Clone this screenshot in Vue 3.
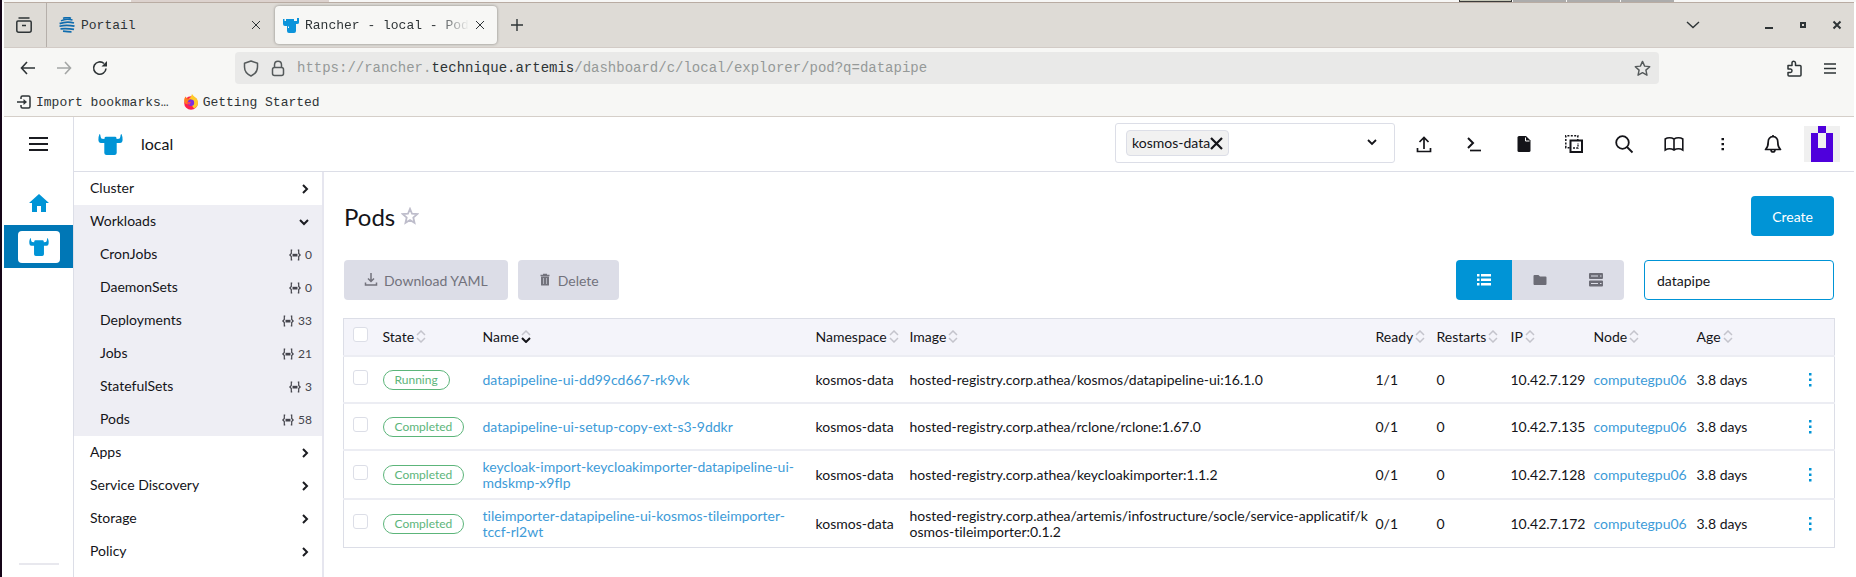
<script setup>
import { ref } from 'vue'

const query = ref('datapipe')

const workloads = [
  { name: 'CronJobs', count: 0 },
  { name: 'DaemonSets', count: 0 },
  { name: 'Deployments', count: 33 },
  { name: 'Jobs', count: 21 },
  { name: 'StatefulSets', count: 3 },
  { name: 'Pods', count: 58 }
]
const closedGroups = ['Apps', 'Service Discovery', 'Storage', 'Policy']

const columns = [
  { key: 'state', label: 'State' },
  { key: 'name', label: 'Name', sorted: true },
  { key: 'namespace', label: 'Namespace' },
  { key: 'image', label: 'Image' },
  { key: 'ready', label: 'Ready' },
  { key: 'restarts', label: 'Restarts' },
  { key: 'ip', label: 'IP' },
  { key: 'node', label: 'Node' },
  { key: 'age', label: 'Age' }
]

const pods = [
  { state: 'Running', name: 'datapipeline-ui-dd99cd667-rk9vk', image: 'hosted-registry.corp.athea/kosmos/datapipeline-ui:16.1.0', ready: '1/1', ip: '10.42.7.129' },
  { state: 'Completed', name: 'datapipeline-ui-setup-copy-ext-s3-9ddkr', image: 'hosted-registry.corp.athea/rclone/rclone:1.67.0', ready: '0/1', ip: '10.42.7.135' },
  { state: 'Completed', name: 'keycloak-import-keycloakimporter-datapipeline-ui-mdskmp-x9flp', image: 'hosted-registry.corp.athea/keycloakimporter:1.1.2', ready: '0/1', ip: '10.42.7.128' },
  { state: 'Completed', name: 'tileimporter-datapipeline-ui-kosmos-tileimporter-tccf-rl2wt', image: 'hosted-registry.corp.athea/artemis/infostructure/socle/service-applicatif/kosmos-tileimporter:0.1.2', ready: '0/1', ip: '10.42.7.172' }
]

const steer = 'M1.5 0C2.3 0 2.4 1 2.7 3Q3 4.5 4 4.7L6.5 5V4Q6.8 2.7 8 2.7H17Q18.3 2.7 18.5 4V5L21 4.7Q22 4.5 22.3 3C22.6 1 22.7 0 23.5 0Q24.8 3 24.6 6Q24.4 9 22 9H18.7V19Q18.5 21 16.5 21H8.5Q6.4 21 6.3 19V9H3Q.6 9 .4 6Q.2 3 1.5 0Z'
</script>

<template>
  <div class="desktop">
    <div class="behind">
      <span class="behind-tab"></span>
      <span class="behind-boxes"><i class="current"></i><i></i><i></i><i></i></span>
    </div>

    <div class="window">
      <header class="browser">
        <div class="tabs">
          <button class="view" aria-label="Firefox View">
            <svg width="16" height="16" viewBox="0 0 16 16" fill="none" stroke="currentColor" stroke-width="1.5"><path d="M2.5 1h11M2 4h12q1.2 0 1.2 1.2v8q0 2-2 2H2.8q-2 0-2-2v-8Q.8 4 2 4ZM6 8.500h4" /></svg>
          </button>
          <div class="tab">
            <svg width="16" height="16" viewBox="0 0 16 16"><g fill="none" stroke="#0f6cae" stroke-width="1.5"><path d="M4 1.200Q9-.3 12 1.300M2 3.800q5-2.800 11.500-.8" /><path d="M.6 6.600Q8 3.800 15 6M.5 9.200q7-1.800 15 0M1.500 11.800q7-.6 13.500.6M4 14.200q5 .6 8.500.6" stroke-width="1.700" /></g></svg>
            <span class="tab-title">Portail</span>
            <button class="plain" aria-label="Close tab"><svg width="10" height="10" viewBox="0 0 10 10" stroke="currentColor"><path d="m1 1 8 8M9 1 1 9" /></svg></button>
          </div>
          <div class="tab active">
            <svg width="16" height="15" viewBox="0 0 16 15" fill="#0c94db"><path d="M0 1h1.500v2H3V1h8v2h3V0h2v4.500q0 1.500-2 1.500h-1v7q0 2-2 2H6q-2 0-2-2V8H2Q0 8 0 6Z" /><path d="M5 8.500h1v1.500H5z" fill="#fff" /></svg>
            <span class="tab-title fade">Rancher - local - Pod</span>
            <button class="plain" aria-label="Close tab"><svg width="10" height="10" viewBox="0 0 10 10" stroke="currentColor"><path d="m1 1 8 8M9 1 1 9" /></svg></button>
          </div>
          <button class="plain new-tab" aria-label="New tab"><svg width="14" height="14" viewBox="0 0 14 14" stroke="currentColor" stroke-width="1.4"><path d="M7 1v12M1 7h12" /></svg></button>
          <div class="wincontrols">
            <button class="plain tab-list" aria-label="List all tabs"><svg width="14" height="8" viewBox="0 0 14 8" fill="none" stroke="currentColor" stroke-width="1.4"><path d="m1 1 6 5.500L13 1" /></svg></button>
            <button class="plain" aria-label="Minimize"><svg width="10" height="10" viewBox="0 0 10 10"><path d="M1 7h8v2H1z" fill="currentColor" /></svg></button>
            <button class="plain" aria-label="Maximize"><svg width="10" height="10" viewBox="0 0 10 10"><path d="M3 3h4v4H3z" fill="none" stroke="currentColor" stroke-width="2" /></svg></button>
            <button class="plain" aria-label="Close"><svg width="10" height="10" viewBox="0 0 10 10" stroke="currentColor" stroke-width="2"><path d="m1.500 1.500 7 7M8.500 1.500l-7 7" /></svg></button>
          </div>
        </div>

        <div class="toolbar">
          <div class="history">
            <button class="plain" aria-label="Back"><svg width="16" height="14" viewBox="0 0 16 14" fill="none" stroke="currentColor" stroke-width="1.600"><path d="M7 1 1.500 7 7 13M1.500 7H15" /></svg></button>
            <button class="plain off" disabled aria-label="Forward"><svg width="16" height="14" viewBox="0 0 16 14" fill="none" stroke="currentColor" stroke-width="1.600"><path d="m9 1 5.500 6L9 13M14.500 7H1" /></svg></button>
            <button class="plain" aria-label="Reload"><svg width="16" height="16" viewBox="0 0 16 16"><path d="M14 8.500A6.200 6.200 0 1 1 12 3.500" fill="none" stroke="currentColor" stroke-width="1.600" /><path d="M15 1v5.500H9.500z" fill="currentColor" /></svg></button>
          </div>
          <div class="urlbar">
            <svg width="16" height="17" viewBox="0 0 16 17" fill="none" stroke="currentColor" stroke-width="1.500"><path d="M8 1 14.500 3.300V7q0 6-6.500 9Q1.500 13 1.500 7V3.300Z" stroke-linejoin="round" /></svg>
            <svg width="14" height="17" viewBox="0 0 14 17" fill="none" stroke="currentColor" stroke-width="1.500"><rect x="1.500" y="7.500" width="11" height="8" rx="2" /><path d="M3.500 7.500V5Q3.500 1.300 7 1.300T10.500 5v2.500" /></svg>
            <span class="url">https://rancher.<b>technique.artemis</b>/dashboard/c/local/explorer/pod?q=datapipe</span>
            <button class="plain" aria-label="Bookmark this page"><svg width="17" height="17" viewBox="0 0 24 24" fill="none" stroke="currentColor" stroke-width="2" stroke-linejoin="round"><path d="m12 2 3 6.600 7.200.8-5.400 4.900L18.300 21.500 12 17.900 5.700 21.500l1.500-7.200L1.800 9.400 9 8.600Z" /></svg></button>
          </div>
          <div class="toolbar-end">
            <button class="plain" aria-label="Extensions"><svg width="15" height="17" viewBox="0 0 15 17" fill="none" stroke="currentColor" stroke-width="1.500" stroke-linejoin="round"><path d="M1 5.500h4V3q0-1.800 1.700-1.800T8.500 3v2.500H13q1 0 1 1V15q0 1-1 1H2q-1 0-1-1v-2.500h2.500q1.500 0 1.500-1.700T3.500 9H1Z" /></svg></button>
            <button class="plain" aria-label="Application menu"><svg width="12" height="11" viewBox="0 0 12 11" stroke="currentColor" stroke-width="1.300"><path d="M0 1h12M0 5.500h12M0 10h12" /></svg></button>
          </div>
        </div>

        <div class="bookmarks">
          <a href="#"><svg width="16" height="14" viewBox="0 0 16 14" fill="none" stroke="currentColor" stroke-width="1.500"><path d="M5 4V2.500Q5 1 6.500 1h6Q14 1 14 2.500v9q0 1.500-1.500 1.500h-6Q5 13 5 11.500V10M1 7h7" /><path d="M7.500 4 11 7l-3.500 3z" fill="currentColor" stroke="none" /></svg><span>Import bookmarks…</span></a>
          <a href="#"><svg width="16" height="16" viewBox="0 0 16 16"><circle cx="8" cy="9" r="6.800" fill="#ff1f4d" /><path d="M9 0q1 1.500 2.500 2.800 3.500 2.200 3.500 6Q15 13 11 14.500L7 9 6 4.500Q8.500 3 9 0Z" fill="#ffca28" /><path d="M2.500 2.500 4 4.500 8 5q2 4-1 6L2 9.500Q0 6 2.500 2.500Z" fill="#ff7a1f" /><circle cx="8" cy="8.800" r="3.200" fill="#7b2fe0" /><path d="M4 8q2 .2 4-.2L6.500 11Q4.500 10 4 8Z" fill="#ff3d5a" /></svg><span>Getting Started</span></a>
        </div>
      </header>

      <div class="app">
        <nav class="rail" aria-label="Clusters">
          <button class="plain burger" aria-label="Menu"><svg width="19" height="14" viewBox="0 0 19 14" stroke="#1b1c21" stroke-width="2"><path d="M0 1h19M0 7h19M0 13h19" /></svg></button>
          <a class="home" href="#" aria-label="Home"><svg width="20" height="18" viewBox="0 0 20 18" fill="#0094d6"><path d="M10 0 20 9H17V18H12V12H8V18H3V9H0Z" /></svg></a>
          <a class="cluster" href="#" aria-label="local"><span><svg width="20" height="18" viewBox="0 0 25 21" preserveAspectRatio="none" fill="#0094d6"><path :d="steer" /></svg></span></a>
          <hr />
        </nav>

        <div class="main">
          <div class="topbar">
            <svg width="25" height="21" viewBox="0 0 25 21" fill="#0094d6"><path :d="steer" /></svg>
            <span class="cluster-name label">local</span>
            <div class="ns-filter">
              <span class="chip"><span class="label">kosmos-data</span><button class="plain" aria-label="Remove kosmos-data"><svg width="13" height="13" viewBox="0 0 13 13" stroke="currentColor" stroke-width="2.200"><path d="m1 1 11 11M12 1 1 12" /></svg></button></span>
              <button class="plain" aria-label="Open namespace list"><svg width="10" height="8" viewBox="0 0 10 8" fill="none" stroke="currentColor" stroke-width="1.800"><path d="m1 1 4 4 4-4" /></svg></button>
            </div>
            <div class="actions">
              <button class="plain" aria-label="Import YAML"><svg width="20" height="20" viewBox="0 0 20 20" fill="none" stroke="currentColor" stroke-width="1.700"><path d="M10 15V4M5.500 8 10 3.500 14.500 8M3.500 14v3.500h13V14" /></svg></button>
              <button class="plain" aria-label="Kubectl shell"><svg width="20" height="20" viewBox="0 0 20 20" fill="none" stroke="currentColor" stroke-width="2"><path d="m4 4 5 5-5 5" /><path d="M6 16.500h11" stroke-width="1.700" /></svg></button>
              <button class="plain" aria-label="Download KubeConfig"><svg width="20" height="20" viewBox="0 0 20 20"><path d="M5 2h7l4.500 4.500V16.500q0 1.500-1.500 1.500H5q-1.500 0-1.500-1.500v-13Q3.500 2 5 2Z" fill="currentColor" /><path d="M11.500 3.500V7H15.500" fill="none" stroke="#fff" /></svg></button>
              <button class="plain" aria-label="Copy KubeConfig"><svg width="20" height="20" viewBox="0 0 20 20" fill="none" stroke="currentColor" stroke-width="1.500"><path d="M1.800 13.800v-12h12v12z" stroke-dasharray="2 1.400" /><rect x="6.500" y="6.500" width="11.500" height="11.500" fill="#fff" stroke-width="2" /><path d="M9 14h5V9" stroke-dasharray="2 1.200" stroke-width="1.300" /></svg></button>
              <button class="plain" aria-label="Search"><svg width="20" height="20" viewBox="0 0 20 20" fill="none" stroke="currentColor" stroke-width="1.800"><circle cx="8.500" cy="8.500" r="6.300" /><path d="m13 13 5.500 5.500" /></svg></button>
              <button class="plain" aria-label="Documentation"><svg width="20" height="20" viewBox="0 0 20 20" fill="none" stroke="currentColor" stroke-width="1.600"><path d="M10 5Q8 3.800 5.500 3.800T1.200 5v11q2-1.200 4.300-1.200T10 16q2-1.200 4.500-1.200t4.300 1.200V5q-1.800-1.200-4.300-1.200T10 5Zm0 0v11" /></svg></button>
              <button class="plain" aria-label="More"><svg width="20" height="20" viewBox="0 0 20 20" fill="currentColor"><path d="M7.500 4H10v2.300H7.500zM7.500 9H10v2.300H7.500zM7.500 14H10v2.300H7.500z" /></svg></button>
              <button class="plain" aria-label="Notifications"><svg width="20" height="20" viewBox="0 0 20 20" fill="none" stroke="currentColor" stroke-width="1.700" stroke-linejoin="round"><path d="M9 2.500q4.800.5 4.800 5.500 0 5 2.700 7.500H1.500Q4.200 13 4.200 8q0-5 4.800-5.500ZM9 2.500V1M7 15.500Q7 18 9 18t2-2.500" /></svg></button>
            </div>
            <svg class="avatar" width="36" height="36" viewBox="0 0 5 5" shape-rendering="crispEdges" role="img" aria-label="User"><path d="M0 0h5v5H0z" fill="#f0f0f0" /><path d="M2 0h1v1h1v4H1V1h1v2h1V1H2Z" fill="#4f00dc" fill-rule="evenodd" /></svg>
          </div>

          <div class="body">
            <nav class="sidebar" aria-label="Resources">
              <a class="group" href="#"><span class="label">Cluster</span><svg width="8" height="10" viewBox="0 0 8 10"><path d="m2 1 4 4-4 4" /></svg></a>
              <div class="open">
                <a class="group" href="#"><span class="label">Workloads</span><svg width="10" height="8" viewBox="0 0 10 8"><path d="m1 2 4 4 4-4" /></svg></a>
                <a v-for="w in workloads" :key="w.name" class="child" href="#">
                  <span class="label">{{ w.name }}</span>
                  <span class="count"><svg width="12" height="12" viewBox="0 0 12 12"><path d="M3.200 1.200H2.300v3.300L.8 6l1.500 1.500v3.300h.9M8.800 1.200h.9v3.300L11.200 6 9.700 7.500v3.300h-.9" fill="none" stroke="currentColor" stroke-width="1.200" /><path d="M3.500 4.800h5v2.700h-5z" fill="currentColor" /></svg>{{ w.count }}</span>
                </a>
              </div>
              <a v-for="g in closedGroups" :key="g" class="group" href="#"><span class="label">{{ g }}</span><svg width="8" height="10" viewBox="0 0 8 10"><path d="m2 1 4 4-4 4" /></svg></a>
            </nav>

            <main class="content">
              <div class="title-row">
                <h1>Pods</h1>
                <button class="plain fav" aria-label="Favorite"><svg width="18" height="18" viewBox="0 0 24 24" fill="none" stroke="#bebdcb" stroke-width="2.400"><path d="m12 2.500 2.700 6.500 7 .5-5.300 4.600 1.600 6.900-6-3.700-6 3.700 1.600-6.900L2.300 9.500l7-.5Z" /></svg></button>
                <button class="btn primary">Create</button>
              </div>

              <div class="tools">
                <button class="btn muted" disabled><svg width="14" height="14" viewBox="0 0 14 14" fill="none" stroke="currentColor" stroke-width="1.500"><path d="M7 0v8.500M4 5.500l3 3 3-3M1.500 9.500V12h11V9.500" /></svg>Download YAML</button>
                <button class="btn muted" disabled><svg width="14" height="14" viewBox="0 0 14 14"><path d="M3 3.500h8V12q0 .5-.5.5h-7q-.5 0-.5-.5Z" fill="currentColor" /><path d="M2.500 2.500h9M5 1.500h4" stroke="currentColor" stroke-width="1.300" /><path d="M5.500 5v6M8.500 5v6" stroke="#dcdde7" stroke-width=".6" /></svg>Delete</button>
                <div class="views" role="group" aria-label="Grouping">
                  <button class="on" aria-label="Flat list"><svg width="14" height="12" viewBox="0 0 14 12" fill="currentColor"><path d="M0 0h2.500v2.500H0zM4 0h10v2.500H4zM0 4.500h2.500V7H0zM4 4.500h10V7H4zM0 9h2.500v2.500H0zM4 9h10v2.500H4z" /></svg></button>
                  <button aria-label="Group by namespace"><svg width="14" height="12" viewBox="0 0 14 12" fill="currentColor"><path d="M1.500 1h4L7 2.500h5.500Q13.500 2.500 13.500 3.500v6.500q0 1-1 1h-11q-1 0-1-1V2q0-1 1-1Z" /></svg></button>
                  <button aria-label="Group by node"><svg width="14" height="14" viewBox="0 0 14 14" fill="currentColor"><path d="M1 0h12q1 0 1 1v4q0 1-1 1H1Q0 6 0 5V1q0-1 1-1ZM1 7.500h12q1 0 1 1v4q0 1-1 1H1q-1 0-1-1v-4q0-1 1-1Z" /><path d="M2 3h7M11 3h1.500M2 10.500h7M11 10.500h1.500" stroke="#dcdde7" stroke-width="1.200" /></svg></button>
                </div>
                <input v-model="query" class="search" type="text" aria-label="Filter" />
              </div>

              <table>
                <colgroup>
                  <col class="c-check" /><col v-for="c in columns" :key="c.key" :class="'c-' + c.key" /><col class="c-menu" />
                </colgroup>
                <thead>
                  <tr>
                    <th class="check"><input type="checkbox" aria-label="Select all" /></th>
                    <th v-for="c in columns" :key="c.key"><span class="th">{{ c.label }}<svg width="10" height="13" viewBox="0 0 10 13" fill="none" stroke-width="1.500"><path d="m1 5 4-4 4 4" stroke="#c4c4cc" /><path d="m1 8 4 4 4-4" :stroke="c.sorted ? '#141419' : '#c4c4cc'" :stroke-width="c.sorted ? 2 : 1.5" /></svg></span></th>
                    <th></th>
                  </tr>
                </thead>
                <tbody>
                  <tr v-for="p in pods" :key="p.name">
                    <td class="check"><input type="checkbox" :aria-label="'Select ' + p.name" /></td>
                    <td><span class="badge">{{ p.state }}</span></td>
                    <td><a href="#">{{ p.name }}</a></td>
                    <td>kosmos-data</td>
                    <td class="image">{{ p.image }}</td>
                    <td>{{ p.ready }}</td>
                    <td>0</td>
                    <td>{{ p.ip }}</td>
                    <td><a href="#">computegpu06</a></td>
                    <td>3.8 days</td>
                    <td class="menu"><button class="plain" aria-label="Row actions"><svg width="4" height="14" viewBox="0 0 4 14" fill="#0094d6"><path d="M1 0h2.500v2.500H1zM1 5.500h2.500V8H1zM1 11h2.500v2.500H1z" /></svg></button></td>
                  </tr>
                </tbody>
              </table>
            </main>
          </div>
        </div>
      </div>
    </div>
  </div>
</template>

<style>
body {
  margin: 0;
  background: #fff;
}
</style>

<style scoped>
* {
  box-sizing: border-box;
}
svg {
  display: block;
  flex: none;
}
a {
  text-decoration: none;
  color: inherit;
}
button {
  font: inherit;
}
.plain {
  display: flex;
  padding: 0;
  border: 0;
  background: none;
  color: inherit;
}
.desktop {
  min-height: 100vh;
  display: flex;
  flex-direction: column;
  border-left: 2px solid #150518;
}
.behind {
  display: flex;
  justify-content: space-between;
  height: 2px;
  padding: 0 182px 0 129px;
  background: #f7f7f6;
}
.behind-tab {
  width: 198px;
  background: #dcd2ce;
}
.behind-boxes {
  display: flex;
  gap: 1px;
}
.behind-boxes i {
  width: 53px;
  background: #acacac;
}
.behind-boxes .current {
  background: #c6c8b8;
  border: solid #3c3c3c;
  border-width: 0 1px 1px;
}
.window {
  flex: 1;
  display: flex;
  flex-direction: column;
  margin: 0 2px;
}

/* browser chrome */
.browser {
  font-family: "Liberation Mono", monospace;
  font-size: 13px;
  color: #2e3436;
  background: #f7f7f5;
  border-bottom: 1px solid #d5cfc9;
}
.tabs {
  display: flex;
  align-items: center;
  height: 46px;
  background: #dedbd6;
  border-top: 1px solid #b9aca3;
  border-bottom: 1px solid #d2cbc6;
}
.view {
  display: flex;
  align-items: center;
  align-self: stretch;
  width: 43px;
  padding: 0 0 0 12px;
  border: 0;
  border-right: 1px solid #b5afaa;
  background: none;
  color: inherit;
}
.tab {
  display: flex;
  align-items: center;
  gap: 6px;
  width: 222px;
  height: 38px;
  padding: 0 8px 0 12px;
  border-radius: 4px;
}
.tab.active {
  margin-left: 6px;
  padding: 0 12px 0 8px;
  background: #f7f7f5;
  box-shadow: 0 0 3px #0006;
}
.tab-title {
  flex: 1;
  min-width: 0;
  white-space: nowrap;
}
.fade {
  -webkit-mask-image: linear-gradient(to left, transparent, #000 32px);
  mask-image: linear-gradient(to left, transparent, #000 32px);
}
.new-tab {
  margin-left: 13px;
}
.wincontrols {
  display: flex;
  align-items: center;
  gap: 24px;
  margin-left: auto;
  padding-right: 12px;
}
.tab-list {
  margin-right: 40px;
}
.toolbar {
  display: flex;
  align-items: center;
  padding: 4px 18px 4px 16px;
}
.history {
  display: flex;
  align-items: center;
  gap: 20px;
  width: 215px;
}
.off {
  color: #a4a6a5;
}
.urlbar {
  flex: 1;
  display: flex;
  align-items: center;
  gap: 12px;
  height: 32px;
  padding: 0 8px;
  margin-right: 128px;
  border-radius: 4px;
  background: #e9e9e8;
  color: #555a5b;
}
.url {
  flex: 1;
  font-size: 14px;
  color: #959998;
}
.url b {
  font-weight: 400;
  color: #2e3436;
}
.toolbar-end {
  display: flex;
  align-items: center;
  gap: 22px;
}
.bookmarks {
  display: flex;
  align-items: center;
  gap: 14px;
  height: 28px;
  padding: 0 12px;
}
.bookmarks a {
  display: flex;
  align-items: center;
  gap: 4px;
}

/* dashboard */
.app {
  flex: 1;
  display: flex;
  font-family: Lato, "Liberation Sans", sans-serif;
  font-size: 14px;
  font-variant-ligatures: no-common-ligatures;
  color: #141419;
}
.label {
  padding-bottom: 2px;
}
.rail {
  display: flex;
  flex-direction: column;
  width: 70px;
  border-right: 1px solid #dcdee7;
}
.burger {
  justify-content: center;
  align-items: center;
  height: 54px;
}
.home {
  display: flex;
  justify-content: center;
  align-items: center;
  height: 54px;
  padding-top: 10px;
}
.cluster {
  display: flex;
  justify-content: center;
  align-items: center;
  height: 43px;
  background: #0077b6;
}
.cluster span {
  display: flex;
  justify-content: center;
  align-items: center;
  width: 42px;
  height: 32px;
  border-radius: 4px;
  background: #fff;
}
.rail hr {
  width: 40px;
  height: 2px;
  margin: auto auto 12px;
  border: 0;
  background: #e8e8ee;
}
.main {
  flex: 1;
  min-width: 0;
  display: flex;
  flex-direction: column;
}
.topbar {
  display: flex;
  align-items: center;
  height: 55px;
  padding: 0 14px 0 24px;
  border-bottom: 1px solid #dcdee7;
}
.cluster-name {
  flex: 1;
  margin-left: 18px;
  font-size: 16px;
}
.ns-filter {
  display: flex;
  align-items: center;
  justify-content: space-between;
  width: 280px;
  height: 40px;
  padding: 0 17px 0 10px;
  margin-bottom: 2px;
  border: 1px solid #dcdee7;
  border-radius: 3px;
}
.chip {
  display: flex;
  align-items: center;
  height: 26px;
  padding: 0 5px;
  border: 1px solid #dcdee7;
  border-radius: 4px;
  background: #f1f1f1;
}
.actions {
  display: flex;
  gap: 30px;
  margin: 0 20px 0 19px;
}
.body {
  flex: 1;
  display: flex;
}
.sidebar {
  width: 250px;
  border-right: 2px solid #e6e6ef;
}
.group,
.child {
  display: flex;
  align-items: center;
  justify-content: space-between;
  height: 33px;
  padding: 0 13px 0 16px;
}
.group svg {
  fill: none;
  stroke: #1b1c21;
  stroke-width: 2;
}
.open {
  background: #eeeef4;
}
.child {
  padding: 0 10px 0 26px;
}
.count {
  display: flex;
  align-items: center;
  gap: 4px;
  font-size: 12px;
  color: #44444c;
}
.content {
  flex: 1;
  min-width: 0;
  padding: 24px 19px 20px;
}
.title-row {
  display: flex;
  align-items: center;
  padding: 0 1px;
}
h1 {
  margin: 0;
  font-size: 24px;
  font-weight: 400;
}
.fav {
  margin: 0 auto 0 6px;
}
.btn {
  display: flex;
  align-items: center;
  gap: 6px;
  height: 40px;
  padding: 0 21px;
  border: 0;
  border-radius: 4px;
}
.primary {
  background: #0094d6;
  color: #fff;
}
.muted {
  padding: 0 20px;
  background: #dcdde7;
  color: #72727c;
}
.tools {
  display: flex;
  gap: 10px;
  margin-top: 24px;
  padding: 0 1px;
}
.views {
  display: flex;
  margin: 0 10px 0 auto;
  border-radius: 4px;
  overflow: hidden;
}
.views button {
  display: flex;
  align-items: center;
  justify-content: center;
  width: 56px;
  padding: 0;
  border: 0;
  background: #dcdde7;
  color: #6c6c76;
}
.views .on {
  background: #0094d6;
  color: #fff;
}
.search {
  width: 190px;
  height: 40px;
  padding: 0 12px;
  border: 1px solid #0094d6;
  border-radius: 4px;
  font: inherit;
  color: inherit;
}
table {
  width: 100%;
  margin-top: 18px;
  table-layout: fixed;
  border-collapse: collapse;
  border: 1px solid #dcdee7;
  line-height: 16px;
}
.c-check { width: 34px; }
.c-state { width: 100px; }
.c-name { width: 333px; }
.c-namespace { width: 94px; }
.c-ready { width: 61px; }
.c-restarts { width: 74px; }
.c-ip { width: 83px; }
.c-node { width: 103px; }
.c-age { width: 94px; }
.c-menu { width: 49px; }
th,
td {
  padding: 0 5px;
  text-align: left;
  font-weight: 400;
}
thead tr {
  height: 37px;
  background: #f4f4fa;
}
tbody tr {
  height: 47px;
  border-top: 2px solid #ecedf3;
}
tbody td {
  padding-top: 8px;
  padding-bottom: 7px;
}
tbody .image {
  padding-right: 0;
  word-break: break-all;
}
th.check,
td.check {
  padding-left: 9px;
}
.check input {
  display: block;
  appearance: none;
  width: 15px;
  height: 15px;
  margin: 0 0 4px;
  border: 1px solid #dcdee7;
  border-radius: 3px;
  background: #fff;
}
.th {
  display: flex;
  align-items: center;
  gap: 2px;
}
td a {
  color: #3d9bd8;
}
.badge {
  display: inline-block;
  padding: 1px 11px;
  border: 1px solid #5cb57a;
  border-radius: 10px;
  font-size: 12px;
  color: #5cb57a;
}
.menu .plain {
  margin: 0 auto;
}
</style>
